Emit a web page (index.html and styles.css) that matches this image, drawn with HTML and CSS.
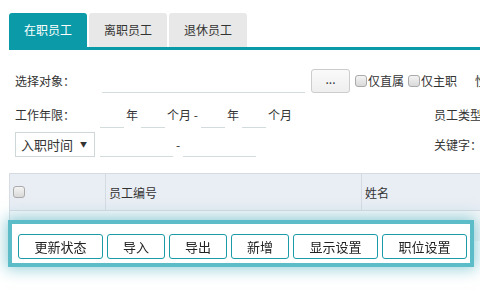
FILE: index.html
```html
<!DOCTYPE html>
<html lang="zh-cn">
<head>
	<meta charset="utf-8"/>
	<title>员工管理</title>
	<link rel="stylesheet" href="styles.css">
</head>
<body>
	<div class="tabs">
		<a class="tab active">在职员工</a>
		<a class="tab">离职员工</a>
		<a class="tab">退休员工</a>
	</div>

	<div class="search">
		<div class="row row1">
			<span class="lbl">选择对象：</span>
			<input type="text" class="line w-obj"/>
			<button class="pick">...</button>
			<label class="chk"><input type="checkbox" class="cb"/>仅直属</label>
			<label class="chk"><input type="checkbox" class="cb"/>仅主职</label>
			<span class="more">性别</span>
		</div>
		<div class="row row2">
			<div class="left">
				<span class="lbl">工作年限：</span>
				<input type="text" class="line w-s"/><span class="unit">年</span>
				<input type="text" class="line w-s"/><span class="unit">个月 -</span>
				<input type="text" class="line w-s"/><span class="unit">年</span>
				<input type="text" class="line w-s"/><span class="unit">个月</span>
			</div>
			<span class="rlbl">员工类型：</span>
		</div>
		<div class="row row3">
			<div class="left">
				<div class="sel">入职时间<i>▼</i></div>
				<input type="text" class="line w-d"/><span class="dash">-</span>
				<input type="text" class="line w-d"/>
			</div>
			<span class="rlbl">关键字：</span>
		</div>
	</div>

	<div class="grid">
		<div class="thead">
			<div class="col c1"><input type="checkbox" class="cb"/></div>
			<div class="col c2">员工编号</div>
			<div class="col c3">姓名</div>
		</div>
		<div class="tbody"></div>
	</div>

	<div class="toolbar">
		<button class="btn b-w">更新状态</button>
		<button class="btn b-s">导入</button>
		<button class="btn b-s">导出</button>
		<button class="btn b-s">新增</button>
		<button class="btn b-w">显示设置</button>
		<button class="btn b-w">职位设置</button>
	</div>
</body>
</html>
```

FILE: styles.css
```css
* {
	box-sizing: border-box;
}
body {
	margin: 0;
	font-family: "Noto Sans CJK SC", "Liberation Sans", sans-serif;
	font-size: 12px;
	color: #333;
	background: #fff;
	overflow: hidden;
}

/* tabs */
.tabs {
	display: flex;
	gap: 2px;
	margin-left: 9px;
	padding-top: 13px;
	border-bottom: 3px solid #0a9aa8;
}
.tab {
	width: 78px;
	height: 34px;
	line-height: 34px;
	text-align: center;
	font-size: 12px;
	color: #333;
	background: #e8e8e8;
	border-radius: 3px 3px 0 0;
}
.tab.active {
	background: #0a9aa8;
	color: #fff;
}

/* search form */
.search {
	padding-left: 15px;
	white-space: nowrap;
}
.row {
	display: flex;
	align-items: center;
}
.row > *, .left > * {
	flex-shrink: 0;
}
.row1 {margin-top: 18px; height: 25px;}
.row2 {margin-top: 8px; height: 26px;}
.row3 {margin-top: 4px; height: 26px;}
.left {
	display: flex;
	align-items: center;
	width: 419px;
}
.lbl {
	width: 85px;
}
.row1 .lbl {width: 87px;}
.line {
	height: 25px;
	border: 0;
	border-bottom: 1px solid #d3dcdd;
	outline: 0;
	background: transparent;
}
.w-obj {width: 203px; align-self: flex-end; height: 26px;}
.w-s {width: 24px; align-self: flex-end;}
.w-d {width: 73px; align-self: flex-end;}
.row2 .line {height: 26px; margin-bottom: -1px;}
.unit {
	padding: 0 3px 0 2px;
}
.dash {
	padding: 0 3px;
}
.pick {
	width: 39px;
	height: 24px;
	margin-left: 6px;
	border: 1px solid #ccc;
	border-radius: 3px;
	background: linear-gradient(#fafafa, #efefef);
	font-size: 12px;
	color: #333;
	padding: 0 0 4px;
	font-family: inherit;
}
.chk {
	display: flex;
	align-items: center;
	margin-left: 5px;
}
.chk + .chk {margin-left: 4px;}
.cb {
	-webkit-appearance: none;
	appearance: none;
	width: 12px;
	height: 12px;
	margin: 0 1px 0 0;
	border: 1px solid #aaa;
	border-radius: 3px;
	background: linear-gradient(#f4f4f4, #d9d9d9);
}
.more {margin-left: 18px;}
.sel {
	width: 80px;
	height: 25px;
	line-height: 23px;
	padding-left: 5px;
	border: 1px solid #cfd8d8;
	font-size: 13px;
	margin-right: 5px;
	position: relative;
}
.sel i {
	font-style: normal;
	font-size: 7px;
	position: absolute;
	right: 7px;
	top: 0;
}

/* table */
.grid {
	margin: 16px 0 0 9px;
	border-left: 1px solid #d8dde3;
}
.thead {
	display: flex;
	height: 38px;
	background: #e9edf4;
	border-top: 1px solid #d5dbe2;
	border-bottom: 1px solid #d5dbe2;
}
.col {
	display: flex;
	align-items: center;
	padding-left: 3px;
	border-right: 1px solid #d5dbe2;
}
.c1 {width: 96px;}
.c2 {width: 256px;}
.c3 {flex: 1; border-right: 0;}
.tbody {
	height: 30px;
	background: #f5f7f9;
}

/* floating toolbar */
.toolbar {
	position: fixed;
	left: 8px;
	top: 220px;
	width: 466px;
	height: 47px;
	display: flex;
	gap: 4px;
	padding: 10px 0 0 6px;
	background: #fff;
	border: 4px solid #5cbdc8;
	box-shadow: 0 0 14px 2px rgba(60, 170, 185, .55);
}
.btn {
	height: 25px;
	border: 1px solid #1b9aa8;
	border-radius: 3px;
	background: #fff;
	font-family: inherit;
	font-size: 13px;
	color: #222;
	padding: 0;
}
.b-w {width: 85px;}
.b-s {width: 58px;}
```
